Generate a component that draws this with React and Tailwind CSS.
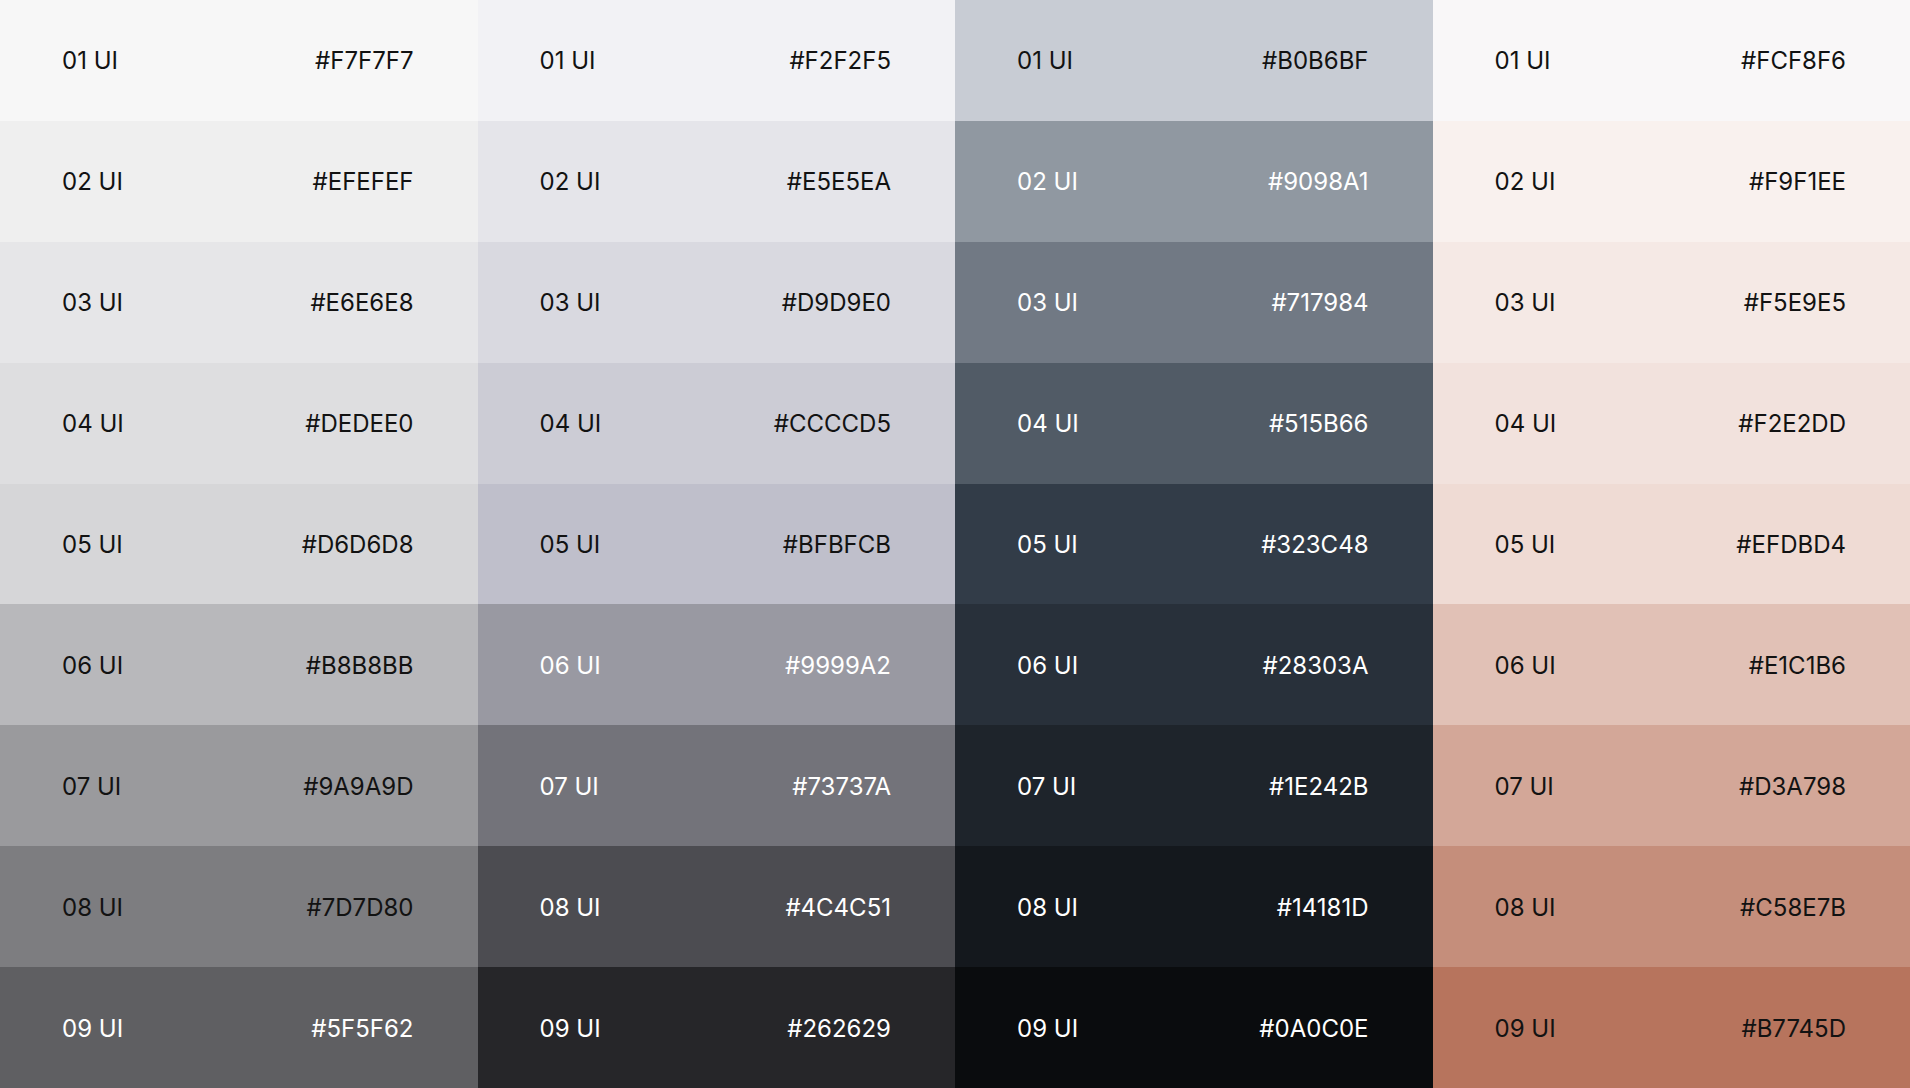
// Palette swatches: [hex label, background class, text class]
const palettes = [
  [
    ["#F7F7F7", "bg-[#F7F7F7]", "text-[#121212]"],
    ["#EFEFEF", "bg-[#EFEFEF]", "text-[#121212]"],
    ["#E6E6E8", "bg-[#E6E6E8]", "text-[#121212]"],
    ["#DEDEE0", "bg-[#DEDEE0]", "text-[#121212]"],
    ["#D6D6D8", "bg-[#D6D6D8]", "text-[#121212]"],
    ["#B8B8BB", "bg-[#B8B8BB]", "text-[#121212]"],
    ["#9A9A9D", "bg-[#9A9A9D]", "text-[#121212]"],
    ["#7D7D80", "bg-[#7D7D80]", "text-[#121212]"],
    ["#5F5F62", "bg-[#5F5F62]", "text-white"],
  ],
  [
    ["#F2F2F5", "bg-[#F2F2F5]", "text-[#121212]"],
    ["#E5E5EA", "bg-[#E5E5EA]", "text-[#121212]"],
    ["#D9D9E0", "bg-[#D9D9E0]", "text-[#121212]"],
    ["#CCCCD5", "bg-[#CCCCD5]", "text-[#121212]"],
    ["#BFBFCB", "bg-[#BFBFCB]", "text-[#121212]"],
    ["#9999A2", "bg-[#9999A2]", "text-white"],
    ["#73737A", "bg-[#73737A]", "text-white"],
    ["#4C4C51", "bg-[#4C4C51]", "text-white"],
    ["#262629", "bg-[#262629]", "text-white"],
  ],
  [
    ["#B0B6BF", "bg-[#C8CCD4]", "text-[#121212]"],
    ["#9098A1", "bg-[#9098A1]", "text-white"],
    ["#717984", "bg-[#717984]", "text-white"],
    ["#515B66", "bg-[#515B66]", "text-white"],
    ["#323C48", "bg-[#323C48]", "text-white"],
    ["#28303A", "bg-[#28303A]", "text-white"],
    ["#1E242B", "bg-[#1E242B]", "text-white"],
    ["#14181D", "bg-[#14181D]", "text-white"],
    ["#0A0C0E", "bg-[#0A0C0E]", "text-white"],
  ],
  [
    ["#FCF8F6", "bg-[#F9F7F8]", "text-[#121212]"],
    ["#F9F1EE", "bg-[#F9F1EE]", "text-[#121212]"],
    ["#F5E9E5", "bg-[#F5E9E5]", "text-[#121212]"],
    ["#F2E2DD", "bg-[#F2E2DD]", "text-[#121212]"],
    ["#EFDBD4", "bg-[#EFDBD4]", "text-[#121212]"],
    ["#E1C1B6", "bg-[#E1C1B6]", "text-[#121212]"],
    ["#D3A798", "bg-[#D3A798]", "text-[#121212]"],
    ["#C58E7B", "bg-[#C58E7B]", "text-[#121212]"],
    ["#B7745D", "bg-[#B7745D]", "text-[#121212]"],
  ],
];

function Swatch({ index, hex, bg, fg }) {
  return (
    <div
      className={`flex-1 flex items-center justify-between pl-[62px] pr-[64px] pt-[2px] ${bg} ${fg}`}
    >
      <span>{`0${index + 1} UI`}</span>
      <span>{hex}</span>
    </div>
  );
}

export default function App() {
  return (
    <div className="grid grid-cols-4 h-[1088px] w-full font-['Inter','Noto_Sans',sans-serif] text-[24px] leading-none">
      {palettes.map((col, c) => (
        <div key={c} className="flex flex-col h-full">
          {col.map(([hex, bg, fg], i) => (
            <Swatch key={hex} index={i} hex={hex} bg={bg} fg={fg} />
          ))}
        </div>
      ))}
    </div>
  );
}
